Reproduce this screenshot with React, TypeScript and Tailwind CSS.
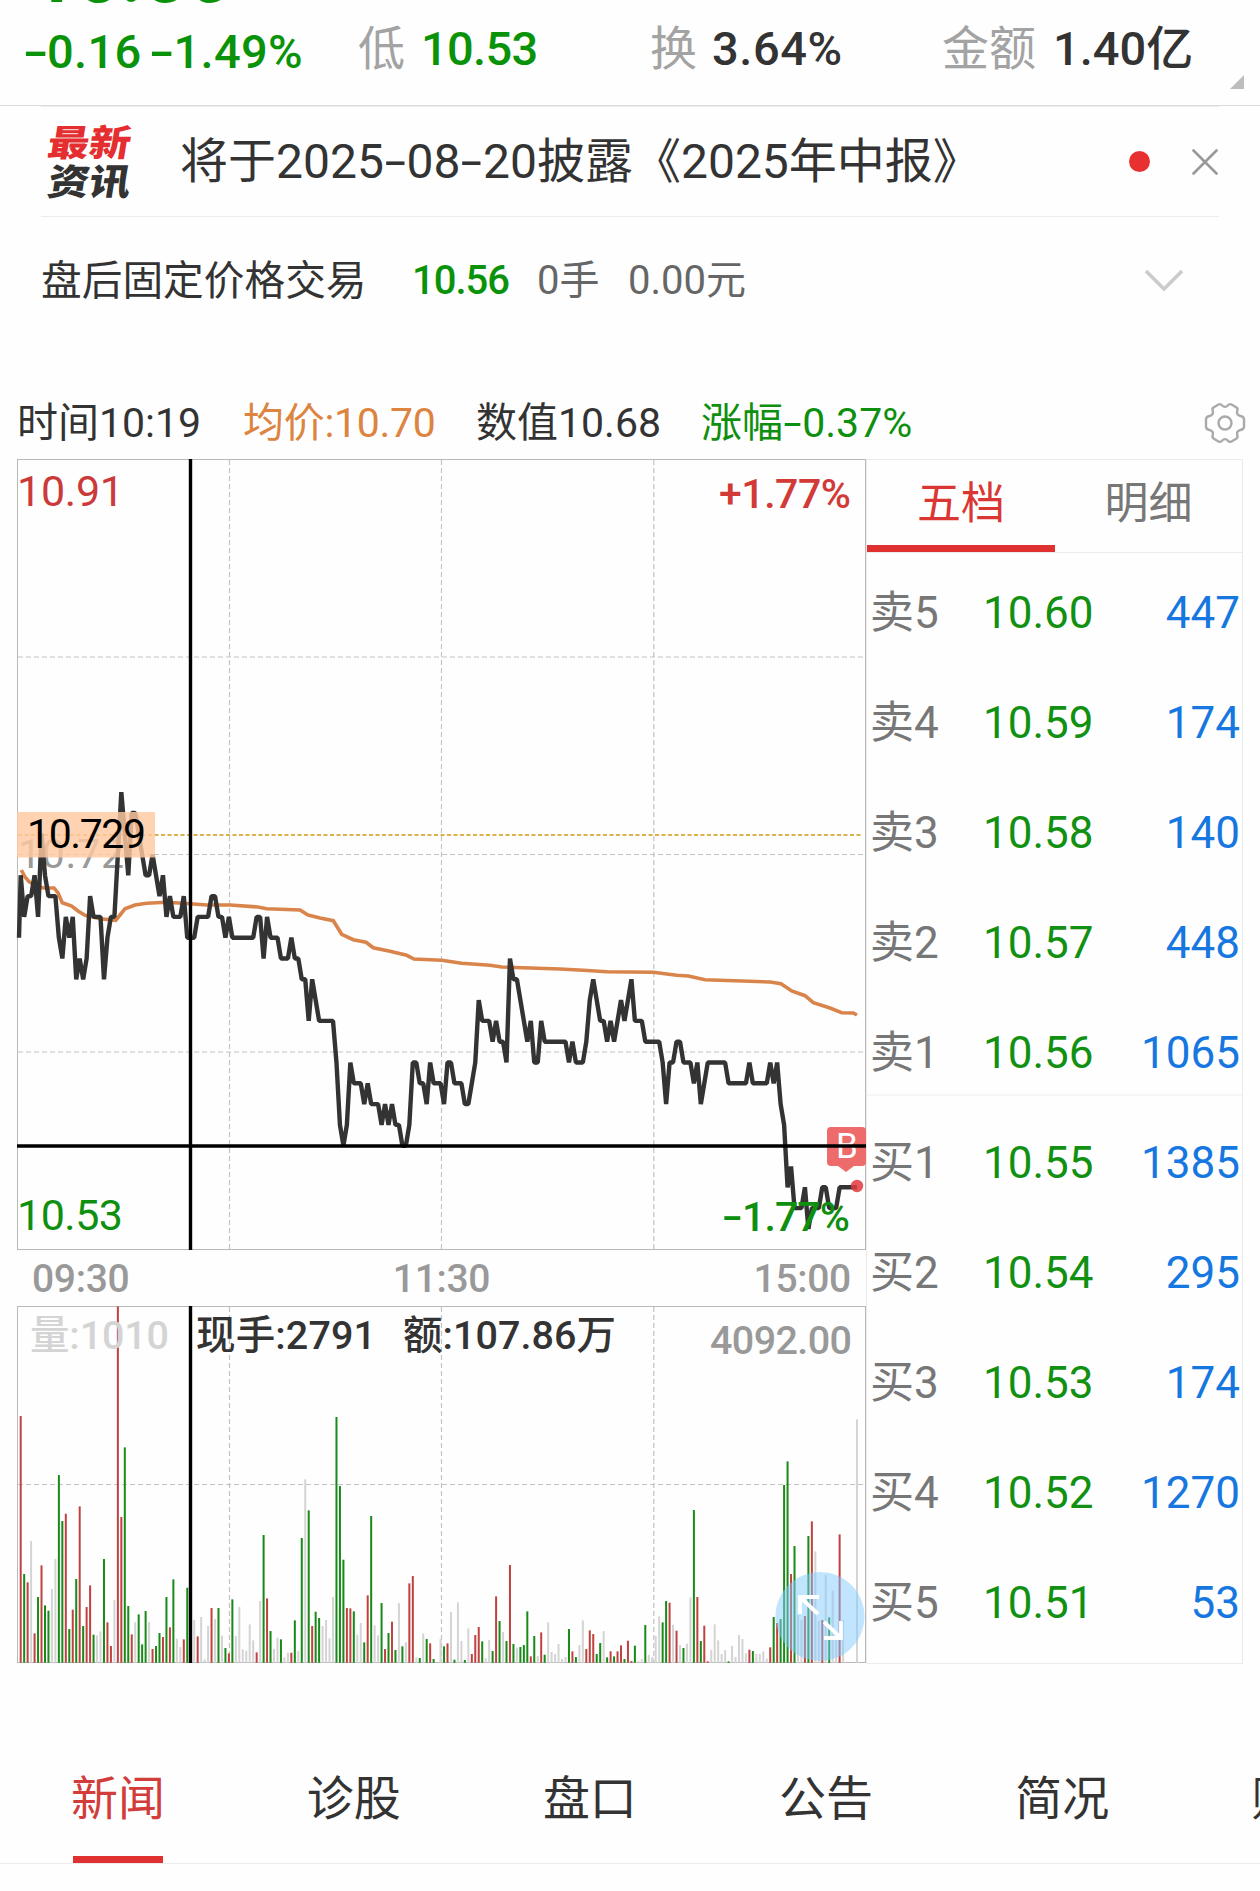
import { Fragment } from "react";

type Tone = "r" | "g" | "n";

// Price of every minute, in hundredths above 10.00
const PRICES = [
  71, 69, 70, 70, 71, 69, 73, 71, 70, 70, 70, 68, 67, 69, 68, 69, 66, 67, 66, 67,
  70, 69, 69, 69, 66, 68, 69, 69, 72, 75, 73, 71, 74, 74, 73, 72, 71, 71, 72, 71,
  70, 71, 69, 70, 69, 69, 69, 70, 68, 68, 68, 69, 69, 69, 69, 70, 70, 69, 69, 68,
  69, 68, 68, 68, 68, 68, 68, 68, 69, 69, 67, 69, 68, 68, 68, 67, 67, 67, 68, 67,
  67, 66, 66, 64, 66, 65, 64, 64, 64, 64, 64, 62, 59, 58, 59, 62, 61, 61, 61, 60,
  61, 60, 60, 60, 59, 60, 59, 60, 59, 59, 58, 58, 59, 62, 62, 61, 61, 60, 62, 61,
  61, 61, 60, 62, 62, 61, 61, 61, 60, 60, 61, 62, 65, 64, 64, 64, 63, 64, 63, 63,
  62, 67, 66, 66, 65, 64, 63, 64, 62, 62, 64, 63, 63, 63, 63, 63, 63, 63, 62, 63,
  62, 62, 62, 63, 65, 66, 65, 64, 64, 63, 64, 63, 64, 65, 64, 65, 66, 64, 64, 64,
  63, 63, 63, 63, 63, 62, 60, 62, 62, 63, 63, 62, 62, 62, 61, 62, 60, 61, 62, 62,
  62, 62, 62, 62, 61, 61, 61, 61, 61, 61, 62, 61, 61, 61, 61, 61, 62, 61, 62, 60,
  59, 56, 57, 55, 55, 55, 56, 54, 55, 55, 55, 56, 56, 55, 55, 55, 56, 56, 56, 56,
  56, 56,
];

const AVERAGE =
  "21.3,870 25,877 29,881.7 36.7,886 43.3,888 54,888 58,893 62.3,902.7 71.7,906 78,911 85,915.3 100,918.7 115.7,920.3 120,915 125,908.7 135,905 146.7,903.3 166.7,902.3 190,903.7 206.7,905 230,905 258,907 266.7,908.7 300,910 308,915 320,918 333.3,920.7 341.7,934.3 353.3,939.7 366,942.3 373.3,947.7 390,951.3 406.7,955.3 414,959 441.7,960.3 461.7,963.3 490,965.3 501.7,967 560,969 583.3,970.3 606.7,971.7 653.3,972.3 676.7,975.3 688.3,976 705,979.7 770,982 781,983.7 791.7,991 805,995.7 813.3,1002.7 830,1008 841.7,1012.7 853.3,1013 857,1015";

// Tone and volume of every minute
const VOLUMES = `
r740 g266 r241 n365 r88 g197 r292 g172 g156 n221 n311 g563 g425 r447 g101 r159 g251 r469 g110 r167
r232 g84 n82 n94 g311 r121 r50 n188 r1069 r437 g646 g170 r85 n122 g145 g55 g155 n122 r41 g50
g89 r77 g197 r106 g250 n72 n47 r70 g225 n0 n128 r79 n137 n10 n110 r164 n131 g164 n81 g44
r28 g190 n80 n167 n40 n36 n115 n67 r31 n185 g383 r193 g95 n41 n75 g70 n16 n30 r30 g127
n35 g374 n550 g457 r110 g153 g134 n110 n128 n73 n197 g737 g530 g309 r164 r163 g154 n84 n119 g61
r202 g440 n112 n82 g179 r41 g89 r123 g38 n179 g49 n61 r238 r260 n16 g14 n88 g71 r58 g11
n0 n71 g49 r58 n152 g9 n181 n65 g8 n103 r26 r83 r107 g64 n14 n68 g35 r199 g125 n92
g65 r293 g56 n45 g47 g53 g154 r19 g80 n20 r91 g24 n121 n32 n26 n56 n11 n17 g101 r34
g17 n53 n127 r41 r97 r86 g26 g59 n95 g16 r34 g19 r34 r52 g11 r66 r5 g51 n5 n11
g113 n23 n17 n80 n139 g121 g185 r180 n114 r96 n53 g44 n57 n196 g458 r197 g65 r111 r4 n38
n115 n67 n26 n38 g4 n51 n17 n83 n71 n28 r39 g35 n26 n26 n34 n12 r46 g137 r119 g131
g533 g604 r266 g350 n143 n128 r140 g380 r424 n334 n125 r128 n263 g136 n217 n68 r385 n128 n0 n0
n0 n730`
  .trim()
  .split(/\s+/)
  .map((v) => ({ tone: v[0] as Tone, value: Number(v.slice(1)) }));

const BAR_COLORS: Record<Tone, string> = {
  r: "#c0413f",
  g: "#178a17",
  n: "#d4d4d4",
};

const ORDERS = [
  ["卖5", "10.60", "447"],
  ["卖4", "10.59", "174"],
  ["卖3", "10.58", "140"],
  ["卖2", "10.57", "448"],
  ["卖1", "10.56", "1065"],
  ["买1", "10.55", "1385"],
  ["买2", "10.54", "295"],
  ["买3", "10.53", "174"],
  ["买4", "10.52", "1270"],
  ["买5", "10.51", "53"],
];

const TABS = ["新闻", "诊股", "盘口", "公告", "简况", "财务"];

const minuteX = (i: number) => 20.7 + i * 3.47;
const priceY = (p: number) => 854.5 + (72 - p) * 20.8;

// Wide hyphen used between digits
function Dash() {
  return <span className="inline-block w-[.47em] scale-x-160 text-center">-</span>;
}

function Header() {
  return (
    <header className="h-[106px] border-b border-[#dcdcdc]">
      <div className="flex h-[3px] items-end overflow-hidden pl-[32px]">
        <span className="-mb-[12px] text-[77px] leading-none font-bold text-[#0a930a]">
          10.56
        </span>
      </div>
      <div className="relative flex h-[91px] items-center text-[47px] leading-none font-medium whitespace-nowrap">
        <div className="w-[358px] pt-[6px] pl-[25px] tracking-[0.3px] text-[#0a930a]">
          <Dash />
          0.16
          <span className="ml-[10px]">
            <Dash />
            1.49%
          </span>
        </div>
        <div className="w-[292px]">
          <span className="font-normal text-[#a3a3a3]">低</span>
          <span className="ml-[16px] tracking-[-0.7px] text-[#0a930a]">10.53</span>
        </div>
        <div className="w-[292px]">
          <span className="font-normal text-[#a3a3a3]">换</span>
          <span className="ml-[15px] tracking-[0.6px] text-[#333]">3.64%</span>
        </div>
        <div>
          <span className="font-normal text-[#a3a3a3]">金额</span>
          <span className="ml-[17px] text-[#333]">1.40亿</span>
        </div>
        <svg
          className="absolute right-[16px] bottom-[5px]"
          width="14"
          height="14"
          viewBox="0 0 14 14"
        >
          <path d="M14 0V14H0Z" fill="#bdbdbd" />
        </svg>
      </div>
    </header>
  );
}

function NewsBanner() {
  return (
    <section className="mx-[41px] flex h-[111px] items-center border-y border-[#ececec]">
      <div className="mt-[3px] ml-[7px] flex w-[132px] flex-col text-[41.5px] leading-[39px] font-black">
        <span className="w-[83px] origin-center -skew-x-8 scale-y-[.88] text-[#e42e30]">
          最新
        </span>
        <span className="w-[83px] origin-center -skew-x-8 scale-y-[.88] text-[#333]">
          资讯
        </span>
      </div>
      <p className="flex-1 text-[48px] leading-none whitespace-nowrap text-[#333]">
        将于2025
        <Dash />
        08
        <Dash />
        20披露《2025年中报》
      </p>
      <span className="mr-[42px] size-[21px] rounded-full bg-[#e93030]" />
      <svg width="26" height="26" viewBox="0 0 26 26" className="mr-[1px]">
        <path
          d="M1.5 1.5 24.5 24.5M24.5 1.5 1.5 24.5"
          stroke="#999"
          strokeWidth="2.6"
          strokeLinecap="round"
        />
      </svg>
    </section>
  );
}

function AfterHours() {
  return (
    <section className="flex h-[126px] items-center pt-[2px] pr-[76px] pl-[41px] text-[40.7px] leading-none whitespace-nowrap">
      <span className="w-[371px] text-[#333]">盘后固定价格交易</span>
      <span className="w-[125px] text-[40px] font-medium tracking-[-1px] text-[#0a930a]">
        10.56
      </span>
      <span className="w-[91px] text-[40px] text-[#666]">0手</span>
      <span className="flex-1 text-[40px] text-[#666]">0.00元</span>
      <svg width="40" height="24" viewBox="0 0 40 24">
        <path d="M2 2 20 20 38 2" fill="none" stroke="#ccc" strokeWidth="3.6" />
      </svg>
    </section>
  );
}

function Legend() {
  return (
    <div className="mt-[59px] flex h-[57px] items-start pr-[14px] pl-[17px] text-[41px] leading-[42px] whitespace-nowrap">
      <span className="w-[226px] text-[#333]">时间10:19</span>
      <span className="w-[233px] tracking-[-0.3px] text-[#dc8440]">均价:10.70</span>
      <span className="w-[225px] text-[#333]">数值10.68</span>
      <span className="flex-1 text-[#0f8f0f]">
        涨幅
        <Dash />
        0.37%
      </span>
      <svg width="42" height="42" viewBox="0 0 42 42" fill="none" stroke="#aaa" strokeWidth="2.4">
        <path
          strokeLinejoin="round"
          d="M14.5 2.5 Q16.5 1.5 18 3.3 Q21 6.5 24 3.3 Q25.5 1.5 27.5 2.5 L32.5 5.5 Q34 6.5 33.3 8.5 Q32 13 36.5 14 Q39.5 14.5 40 17 L40 25 Q39.5 27.5 36.5 28 Q32 29 33.3 33.5 Q34 35.5 32.5 36.5 L27.5 39.5 Q25.5 40.5 24 38.7 Q21 35.5 18 38.7 Q16.5 40.5 14.5 39.5 L9.5 36.5 Q8 35.5 8.7 33.5 Q10 29 5.5 28 Q2.5 27.5 2 25 L2 17 Q2.5 14.5 5.5 14 Q10 13 8.7 8.5 Q8 6.5 9.5 5.5 Z"
        />
        <circle cx="21" cy="21" r="6.5" />
      </svg>
    </div>
  );
}

function PriceChart() {
  const line = PRICES.map((p, i) => `${minuteX(i)},${priceY(p)}`).join(" ");

  return (
    <svg width="849" height="791" viewBox="17 459 849 791" className="block overflow-visible">
      <g stroke="#c4c4c4" strokeWidth="1.2" strokeDasharray="5 3">
        {[229.5, 441.5, 653.8].map((x) => (
          <path key={x} d={`M${x} 460V1249`} />
        ))}
        {[657, 854.5, 1052].map((y) => (
          <path key={y} d={`M18 ${y}H865`} />
        ))}
      </g>
      <rect x="17.5" y="459.5" width="848" height="790" fill="none" stroke="#b9b9b9" />
      <path d="M18 835H863" stroke="#dcb04c" strokeWidth="2" strokeDasharray="4 2.5" />
      <text x="18" y="868" fontSize="41" fill="#999" textLength="106">10.72</text>
      <polyline points={AVERAGE} fill="none" stroke="#d9844a" strokeWidth="3.6" />
      <polyline
        points={`19,${priceY(68)} ${line}`}
        fill="none"
        stroke="#333"
        strokeWidth="4.4"
        strokeLinejoin="bevel"
      />
      <text x="17" y="506" fontSize="43" fill="#cb3a3a" textLength="107">10.91</text>
      <text x="719" y="508" fontSize="41" fontWeight="500" fill="#d23a38" textLength="132">+1.77%</text>
      <text x="17" y="1230" fontSize="43" fill="#0f8f0f" textLength="106">10.53</text>
      <g fontSize="41" fontWeight="500" fill="#0f8f0f">
        <text transform="translate(722 1231) scale(1.5 1)">-</text>
        <text x="742" y="1231" textLength="108">1.77%</text>
      </g>
      <rect x="17" y="812" width="138" height="45.5" fill="#ffc8a0" fillOpacity="0.82" />
      <text x="27" y="848" fontSize="41" fill="#000" textLength="119">10.729</text>
      <path
        d="M831 1127H862Q866 1127 866 1131V1162Q866 1166 862 1166H854L846 1172L838 1166H831Q827 1166 827 1162V1131Q827 1127 831 1127Z"
        fill="#ee6b6b"
      />
      <text x="847" y="1158" fontSize="35" fill="#fff" textAnchor="middle">B</text>
      <circle cx="857" cy="1186" r="6.2" fill="#e03a3e" fillOpacity="0.85" />
      <path d="M190.5 459V1250M17 1146H866" stroke="#000" strokeWidth="3.4" />
    </svg>
  );
}

function VolumeChart() {
  return (
    <svg width="849" height="358" viewBox="17 1306 849 358" className="block overflow-visible">
      <g stroke="#c4c4c4" strokeWidth="1.2" strokeDasharray="5 3">
        {[229.5, 441.5, 653.8].map((x) => (
          <path key={x} d={`M${x} 1307V1662`} />
        ))}
        <path d="M18 1484.5H865" />
      </g>
      <rect x="17.5" y="1306.5" width="848" height="356" fill="none" stroke="#b9b9b9" />
      {VOLUMES.map(({ tone, value }, i) => (
        <rect
          key={i}
          x={minuteX(i) - 1}
          y={1662.7 - value / 3}
          width="2"
          height={value / 3}
          fill={BAR_COLORS[tone]}
        />
      ))}
      <g fontSize="39.5" fontWeight="500">
        <text x="30" y="1349" fill="#d4d4d4" textLength="139">量:1010</text>
        <text x="196" y="1349" fill="#333" textLength="180">现手:2791</text>
        <text x="403" y="1349" fill="#333" textLength="213">额:107.86万</text>
        <text x="710" y="1354" fill="#999" textLength="142">4092.00</text>
      </g>
      <path d="M190.5 1306V1663" stroke="#000" strokeWidth="3.4" />
      <circle cx="820" cy="1616.5" r="44.5" fill="#83ccff" fillOpacity="0.5" />
      <path
        d="M800 1614V1597H819M801 1598 818 1614M824 1638H841V1621M840 1637 824 1622"
        fill="none"
        stroke="#fff"
        strokeWidth="3.8"
      />
    </svg>
  );
}

function OrderBook() {
  return (
    <aside className="h-[1205px] w-[377px] border border-[#ebebeb] text-[44px] leading-none">
      <div className="flex h-[93px] border-b border-[#ebebeb]">
        <div className="flex w-[188px] items-center justify-center border-b-[7px] border-[#e03131] pt-[2px] text-[#d93634]">
          五档
        </div>
        <div className="flex flex-1 items-center justify-center pb-[5px] text-[#777]">
          明细
        </div>
      </div>
      <div className="pt-[5px]">
        {ORDERS.map(([label, price, amount], i) => (
          <Fragment key={label}>
            {i === 5 && <hr className="-mt-[14px] mb-[12px] border-t-2 border-[#f5f5f5]" />}
            <div className="flex h-[110px] items-center pr-[2px] pl-[3px]">
              <span className="w-[113px] text-[44px] text-[#777]">{label}</span>
              <span className="text-[#119011]">{price}</span>
              <span className="flex-1 text-right text-[#1677e0]">{amount}</span>
            </div>
          </Fragment>
        ))}
      </div>
    </aside>
  );
}

function BottomTabs() {
  return (
    <nav className="mt-[66px] flex h-[134px] overflow-hidden border-b border-[#ebebeb] pl-[72px] text-[47px] leading-none whitespace-nowrap">
      {TABS.map((tab, i) => (
        <div key={tab} className="w-[236.2px] shrink-0">
          <div
            className={
              i === 0
                ? "ml-[1px] flex h-full w-[90px] items-center justify-center border-b-[7px] border-[#e03131] pt-[10px] text-[#d23c3a]"
                : "flex h-full w-[91px] items-center justify-center pt-[3px] text-[#333]"
            }
          >
            {tab}
          </div>
        </div>
      ))}
    </nav>
  );
}

export default function App() {
  return (
    <main className="h-[1891px] w-[1260px] overflow-hidden bg-[#fefefe] font-[Roboto,'Noto_Sans_CJK_SC',sans-serif]">
      <Header />
      <NewsBanner />
      <AfterHours />
      <Legend />
      <div className="flex pl-[17px]">
        <div className="w-[849px]">
          <PriceChart />
          <div className="flex h-[56px] items-center justify-between pt-[3px] pr-[15px] pl-[15px] text-[39px] leading-none font-medium tracking-[-0.3px] text-[#999]">
            <span>09:30</span>
            <span>11:30</span>
            <span>15:00</span>
          </div>
          <VolumeChart />
        </div>
        <OrderBook />
      </div>
      <BottomTabs />
    </main>
  );
}
